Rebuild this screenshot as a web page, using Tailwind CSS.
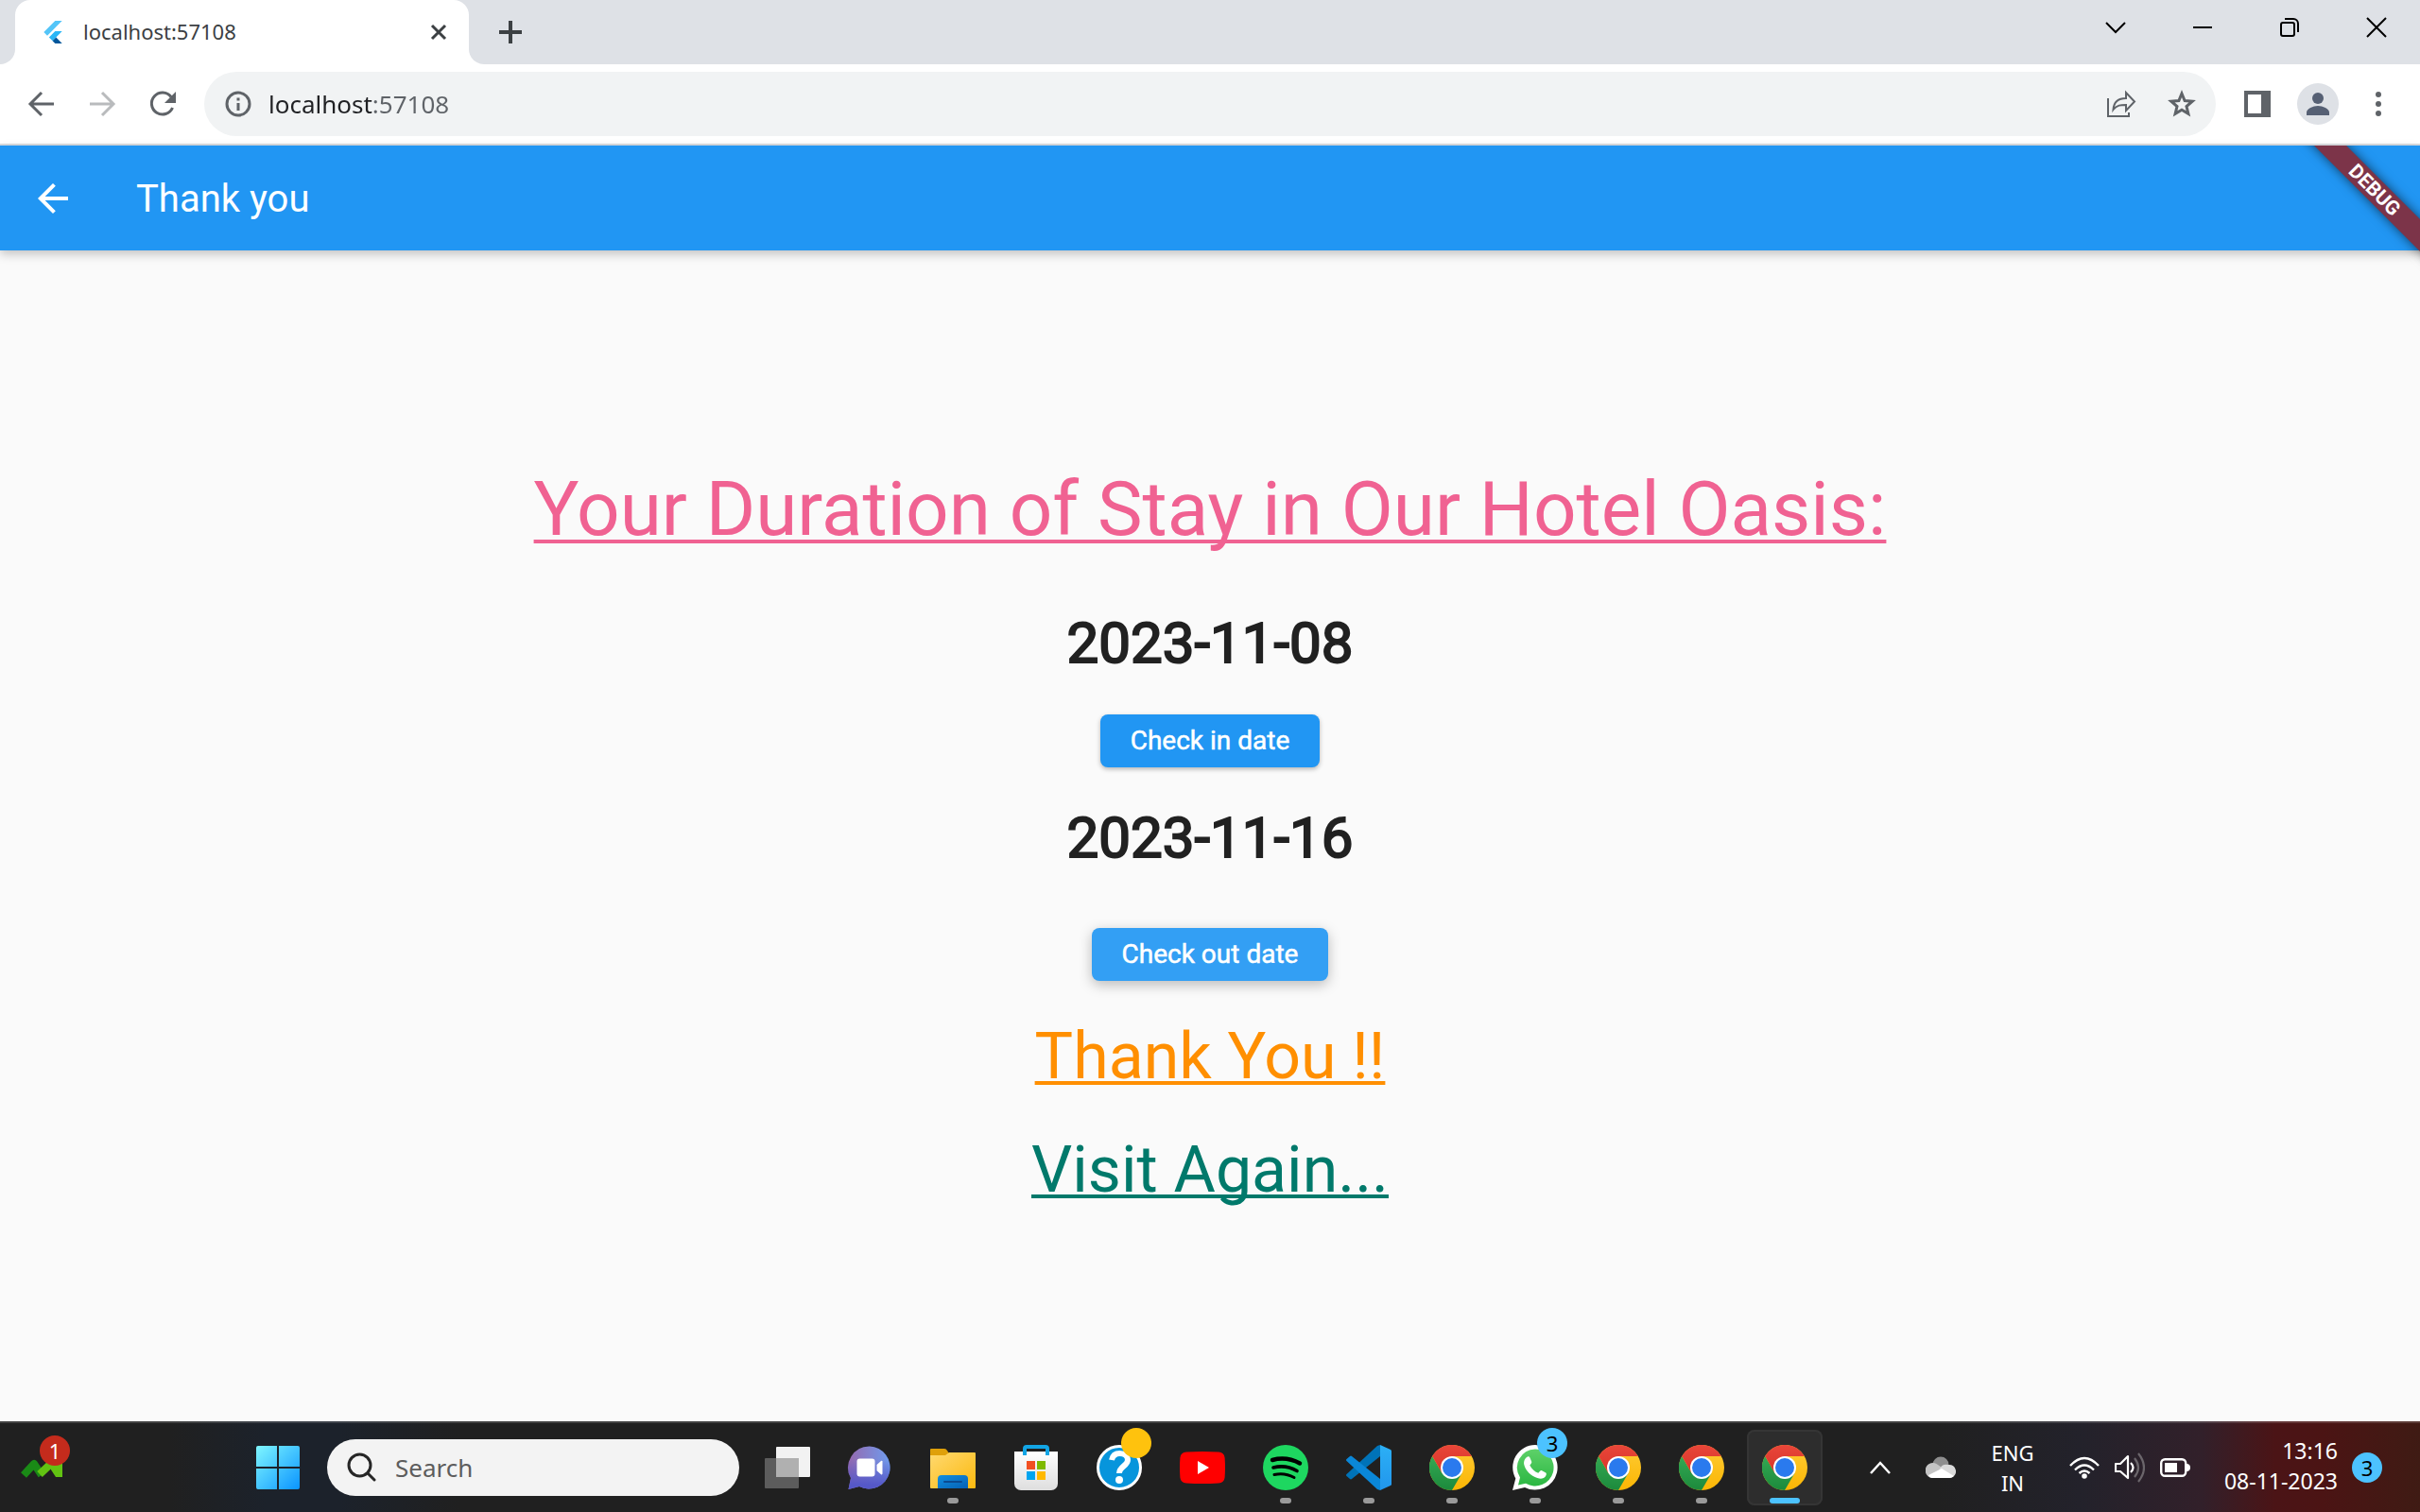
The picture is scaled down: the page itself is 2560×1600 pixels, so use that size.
<!DOCTYPE html>
<html lang="en">
<head>
<meta charset="utf-8">
<title>localhost:57108</title>
<script src="https://cdn.jsdelivr.net/npm/@tailwindcss/browser@4"></script>
</head>
<body class="bg-[#fafafa]">
<svg class="absolute size-0" aria-hidden="true">
  <defs>
    <linearGradient id="gw" x1="0" y1="0" x2="1" y2="1"><stop offset="0" stop-color="#7ff6ff"/><stop offset="1" stop-color="#0a94ff"/></linearGradient>
    <linearGradient id="gchat" x1="0" y1="0" x2="1" y2="0"><stop offset="0" stop-color="#9568ae"/><stop offset="1" stop-color="#6f9cee"/></linearGradient>
    <linearGradient id="gchat2" x1="0" y1="0" x2="0" y2="1"><stop offset=".3" stop-color="#5558c8" stop-opacity="0"/><stop offset=".9" stop-color="#5558c8"/></linearGradient>
    <linearGradient id="gfold" x1="0" y1="0" x2="1" y2="1"><stop offset="0" stop-color="#ffd970"/><stop offset="1" stop-color="#fbb90f"/></linearGradient>
    <linearGradient id="gfb" x1="0" y1="0" x2="1" y2="1"><stop offset="0" stop-color="#1290df"/><stop offset="1" stop-color="#0560b5"/></linearGradient>
    <linearGradient id="gbag" x1="0" y1="0" x2="0" y2="1"><stop offset="0" stop-color="#fff"/><stop offset="1" stop-color="#dedede"/></linearGradient>
    <linearGradient id="gwa" x1="0" y1="0" x2="0" y2="1"><stop offset="0" stop-color="#5ed169"/><stop offset="1" stop-color="#2bb742"/></linearGradient>
    <linearGradient id="gred" x1="0" y1="0" x2="0" y2="1"><stop offset="0" stop-color="#e94639"/><stop offset="1" stop-color="#d8352b"/></linearGradient>
    <linearGradient id="gyel" x1="0" y1="0" x2="0" y2="1"><stop offset="0" stop-color="#fecb35"/><stop offset="1" stop-color="#fbb604"/></linearGradient>
    <linearGradient id="ggrn" x1="0" y1="0" x2="0" y2="1"><stop offset="0" stop-color="#33a853"/><stop offset="1" stop-color="#1c8a3c"/></linearGradient>
    <linearGradient id="gvs" x1="0" y1="0" x2="0" y2="1"><stop offset="0" stop-color="#2cb0f6"/><stop offset="1" stop-color="#2196ec"/></linearGradient>
  </defs>
  <symbol id="chrome" viewBox="0 0 48 48">
    <circle cx="24" cy="24" r="24" fill="url(#gyel)"/>
    <path d="M3.200 12A24 24 0 0 0 24 48L34.400 30H13.600Z" fill="url(#ggrn)"/>
    <path d="M3.200 12A24 24 0 0 1 44.800 12H24L13.600 30Z" fill="url(#gred)"/>
    <circle cx="24" cy="24" r="12" fill="#fff"/><circle cx="24" cy="24" r="10" fill="#2a7aee"/>
  </symbol>
</svg>

<div class="flex min-h-screen flex-col font-['Noto_Sans','Open_Sans',sans-serif]">
  <!-- Tab strip -->
  <header class="flex h-[68px] bg-[#dee1e6] text-[#3c4043]">
    <div class="h-full w-4 bg-white"><div class="h-full rounded-br-2xl bg-[#dee1e6]"></div></div>
    <div class="flex h-full w-[480px] items-center rounded-t-2xl bg-white pr-5 pl-6">
      <svg class="mr-4 size-8 shrink-0" viewBox="-4 -4 32 32"><path d="M14.300 0 2.300 12 6 15.700 21.700 0z" fill="#54c5f8"/><path d="m14.300 11.100-6.400 6.400 3.700 3.700L21.700 11.100z" fill="#29b6f6"/><path d="m11.600 21.200 2.700 2.800h7.400l-6.400-6.500z" fill="#01579b"/></svg>
      <span class="grow pb-0.5 text-[22px] leading-8">localhost:57108</span>
      <button aria-label="Close tab" class="flex size-6 items-center justify-center"><svg class="size-6" viewBox="0 0 24 24" fill="none" stroke="currentColor" stroke-width="3"><path d="m5 5 14 14M19 5 5 19"/></svg></button>
    </div>
    <div class="h-full w-4 bg-white"><div class="h-full rounded-bl-2xl bg-[#dee1e6]"></div></div>
    <button aria-label="New tab" class="ml-4 flex w-6 items-center justify-center"><svg class="size-6" viewBox="0 0 24 24" fill="none" stroke="currentColor" stroke-width="4"><path d="M12 0v24M0 12h24"/></svg></button>
    <div class="ml-auto flex h-[58px] text-black">
      <button aria-label="Search tabs" class="flex w-[92px] items-center justify-center"><svg class="size-6" viewBox="0 0 24 24" fill="none" stroke="currentColor" stroke-width="2"><path d="m2 7 10 10L22 7"/></svg></button>
      <button aria-label="Minimize" class="flex w-[92px] items-center justify-center"><svg class="size-6" viewBox="0 0 24 24" fill="none" stroke="currentColor" stroke-width="2"><path d="M2 12h20"/></svg></button>
      <button aria-label="Restore" class="flex w-[92px] items-center justify-center"><svg class="size-6" viewBox="0 0 24 24" fill="none" stroke="currentColor" stroke-width="2"><rect x="3" y="7" width="14" height="14" rx="2"/><path d="M7 3h9a5 5 0 0 1 5 5v9"/></svg></button>
      <button aria-label="Close" class="flex w-[92px] items-center justify-center"><svg class="size-6" viewBox="0 0 24 24" fill="none" stroke="currentColor" stroke-width="2"><path d="m2 2 20 20M22 2 2 22"/></svg></button>
    </div>
  </header>

  <!-- Toolbar -->
  <div class="flex h-[86px] items-center border-b-2 border-[#dadce0] bg-white px-7 text-[#5f6368]">
    <button aria-label="Back" class="mr-8"><svg class="size-8" viewBox="0 0 32 32" fill="none" stroke="currentColor" stroke-width="3"><path d="M29 16H5M16 4 4 16l12 12"/></svg></button>
    <button aria-label="Forward" class="mr-8 text-[#b9bbbd]"><svg class="size-8" viewBox="0 0 32 32" fill="none" stroke="currentColor" stroke-width="3"><path d="M3 16h24M16 4l12 12-12 12"/></svg></button>
    <button aria-label="Reload" class="mr-7"><svg class="size-8" viewBox="0 0 32 32"><path d="M26.500 20A11.500 11.500 0 1 1 25 8.500" fill="none" stroke="currentColor" stroke-width="3"/><path d="M30 3v12H18z" fill="currentColor"/></svg></button>
    <div class="flex h-[68px] grow items-center rounded-full bg-[#f1f3f4] pr-5 pl-5">
      <svg class="mr-4 size-8 shrink-0" viewBox="0 0 32 32"><circle cx="16" cy="16" r="12" fill="none" stroke="currentColor" stroke-width="3"/><path d="M14.500 15h3v8h-3zM14.500 9.500h3v3h-3z" fill="currentColor"/></svg>
      <input aria-label="Address" value="localhost:57108" class="h-10 min-w-0 grow bg-linear-to-r from-[#202124] from-[110px] to-[#5f6368] to-[110px] bg-clip-text text-[26px] leading-10 text-transparent outline-none">
      <button aria-label="Share" class="mr-8"><svg class="size-8" viewBox="0 0 32 32" fill="none" stroke="currentColor" stroke-width="2"><path d="M2 10v19h22v-4"/><path d="M21 4v6C12 10 8 15 7.500 22c4-5 8-5 13.500-5v6l9-9.500z" stroke-linejoin="miter"/></svg></button>
      <button aria-label="Bookmark"><svg class="size-8" viewBox="0 0 32 32" fill="none" stroke="currentColor" stroke-width="3"><path d="m16 5 3.100 7.500 8.100.7-6.200 5.300 1.900 7.900-6.900-4.200-6.900 4.200L11 18.500l-6.200-5.300 8.100-.7z"/></svg></button>
    </div>
    <button aria-label="Side panel" class="ml-7"><svg class="size-8" viewBox="0 0 32 32"><path d="M2 2h28v28H2zM6 6v20h14V6z" fill="currentColor" fill-rule="evenodd"/></svg></button>
    <button aria-label="Profile" class="ml-[26px]"><svg class="size-11" viewBox="0 0 44 44"><circle cx="22" cy="22" r="22" fill="#dee1e6"/><circle cx="22" cy="16" r="6" fill="#566074"/><path d="M10 34v-3c0-4 7-7 12-7s12 3 12 7v3z" fill="#566074"/></svg></button>
    <button aria-label="Menu" class="ml-[26px]"><svg class="size-8" viewBox="0 0 32 32" fill="currentColor"><circle cx="16" cy="6" r="3"/><circle cx="16" cy="16" r="3"/><circle cx="16" cy="26" r="3"/></svg></button>
  </div>

  <!-- Page -->
  <div class="relative flex grow flex-col font-[Roboto,sans-serif]">
    <div class="z-10 flex h-[111px] items-center bg-[#2196f3] px-8 text-white shadow-[0_4px_10px_rgba(0,0,0,0.22)]">
      <button aria-label="Back"><svg class="size-12" viewBox="0 0 24 24" fill="currentColor"><path d="M20 11H7.830l5.590-5.590L12 4l-8 8 8 8 1.410-1.410L7.830 13H20z"/></svg></button>
      <h1 class="ml-16 pt-0.5 text-[40px] leading-12">Thank you</h1>
    </div>
    <div class="absolute top-0 right-0 z-20 h-[140px] w-[160px] overflow-hidden">
      <div class="absolute top-[35px] right-[-52px] h-6 w-[200px] rotate-45 bg-[#7c3449] text-center text-[21px] leading-6 font-bold text-white shadow-[0_0_12px_rgba(0,0,0,0.6)]">DEBUG</div>
    </div>
    <main class="flex grow flex-col items-center justify-center text-[#212121]">
      <h2 class="text-[80px] leading-[94px] text-[#f06292] underline decoration-4 underline-offset-[5px] [text-decoration-skip-ink:none]">Your Duration of Stay in Our Hotel Oasis:</h2>
      <p class="mt-[60px] text-[60px] leading-[70px] [-webkit-text-stroke:2px_#212121]">2023-11-08</p>
      <button class="mt-10 h-14 rounded-lg bg-[#2196f3] px-8 text-[28px] leading-8 text-white shadow-[0_2px_5px_rgba(0,0,0,0.28)] [-webkit-text-stroke:0.5px_#fff]">Check in date</button>
      <p class="mt-10 text-[60px] leading-[70px] [-webkit-text-stroke:2px_#212121]">2023-11-16</p>
      <button class="mt-[60px] h-14 rounded-lg bg-[#339ff4] px-8 text-[28px] leading-8 text-white shadow-[0_4px_14px_rgba(0,0,0,0.26)] [-webkit-text-stroke:0.5px_#fff]">Check out date</button>
      <p class="mt-10 text-[68px] leading-[80px] text-[#ff8f00] underline decoration-4 underline-offset-[3px] [text-decoration-skip-ink:none]">Thank You !!</p>
      <p class="mt-10 text-[68px] leading-[80px] text-[#00796b] underline decoration-4 underline-offset-[3px] [text-decoration-skip-ink:none]">Visit Again...</p>
    </main>
  </div>

  <!-- Taskbar -->
  <footer class="flex h-24 items-center border-t-2 border-white/15 bg-[linear-gradient(90deg,#202020_0%,#202020_7%,#1c222b_11%,#1c222b_14%,#202020_19%,#202020_80%,#23222b_86%,#32202a_91%,#4b1416_94%,#4b1414_96%,#3f1b14_100%)] bg-origin-border text-white">
    <button aria-label="Widgets" class="relative h-[60px] w-[90px]">
      <svg class="absolute top-5 left-[22px] h-6 w-11" viewBox="0 0 44 24"><path d="M3 18 14 6l8 12" fill="none" stroke="#1a8a16" stroke-width="8" stroke-linejoin="round"/><path d="M20 17 38 0" fill="none" stroke="#62c312" stroke-width="8"/><path d="M24 0h20v20h-7z" fill="#62c312"/></svg>
      <span class="absolute top-[-4px] left-[42px] size-8 rounded-full bg-[#c42b1c] text-center text-[22px] leading-8">1</span>
    </button>
    <button aria-label="Start" class="ml-40 flex w-[88px] items-center justify-center"><svg class="size-[46px]" viewBox="0 0 46 46" fill="url(#gw)"><path d="M2 0h20v22H0V2a2 2 0 0 1 2-2zM24 0h20a2 2 0 0 1 2 2v20H24zM0 24h22v22H2a2 2 0 0 1-2-2zM24 24h22v20a2 2 0 0 1-2 2H24z"/></svg></button>
    <label class="mx-2 flex h-[60px] w-[436px] items-center rounded-full bg-[#f3f3f3] pl-5">
      <svg class="mr-5 size-8 shrink-0" viewBox="0 0 32 32" fill="none" stroke="#262626" stroke-width="3" stroke-linecap="round"><circle cx="14.500" cy="13.500" r="11.500"/><path d="m23 22 7 7"/></svg>
      <input type="search" aria-label="Search" placeholder="Search" class="min-w-0 grow text-[26px] leading-10 text-[#5d5d5d] outline-none placeholder:text-[#5d5d5d]">
    </label>
    <nav class="flex h-20">
      <button aria-label="Task view" class="flex w-[86px] items-center justify-center"><svg class="size-12" viewBox="0 0 48 48"><rect x="12" y="2" width="36" height="32" rx="1" fill="#f2f2f2"/><rect y="14" width="36" height="32" rx="1" fill="#5c5c5c"/><path d="M12 14h24v20H12z" fill="#b0b0b0"/></svg></button>
      <button aria-label="Chat" class="flex w-[88px] items-center justify-center"><svg class="size-12" viewBox="0 0 48 48"><path d="M24 1.500a22.500 22.500 0 1 1-11 42.600L1.500 47l2.500-12A22.500 22.500 0 0 1 24 1.500z" fill="url(#gchat)"/><path d="M24 1.500a22.500 22.500 0 1 1-11 42.600L1.500 47l2.500-12A22.500 22.500 0 0 1 24 1.500z" fill="url(#gchat2)"/><rect x="10.500" y="14.500" width="19" height="19" rx="3" fill="#fff"/><path d="m31.500 21 4.500-4c.6-.5 1.500-.2 1.500.6v13c0 .8-1 1-1.500.6l-4.500-4z" fill="#fff"/></svg></button>
      <button aria-label="File Explorer" class="relative flex w-[88px] items-center justify-center"><svg class="size-12" viewBox="0 0 48 48"><path d="M0 5q0-1 1-1h14q2 0 3 2l2 3v6H0z" fill="#dfa00a"/><path d="M0 11h16l4-3h27q1 0 1 1v36q0 1-1 1H1q-1 0-1-1z" fill="url(#gfold)"/><path d="M8 46V36q0-4 4-4h24q4 0 4 4v10z" fill="url(#gfb)"/><path d="M15 39h18" stroke="#0b4a90" stroke-width="2" stroke-linecap="round"/></svg><i class="absolute bottom-0.5 left-[38px] h-1.5 w-3 rounded-full bg-[#9a9a9a]"></i></button>
      <button aria-label="Microsoft Store" class="flex w-[88px] items-center justify-center"><svg class="size-12" viewBox="0 0 48 48"><path d="M1 7h46v34a7 7 0 0 1-7 7H8a7 7 0 0 1-7-7z" fill="url(#gbag)"/><path d="M12 11V4q0-2 2-2h20q2 0 2 2v7" fill="none" stroke="#12a5e5" stroke-width="4"/><path d="M14 17h9v9h-9z" fill="#f25022"/><path d="M25 17h9v9h-9z" fill="#7fba00"/><path d="M14 28h9v9h-9z" fill="#00a4ef"/><path d="M25 28h9v9h-9z" fill="#ffb900"/></svg></button>
      <button aria-label="Get Help" class="relative flex w-[88px] items-center justify-center"><svg class="size-12" viewBox="0 0 48 48"><circle cx="24" cy="24" r="22.500" fill="#0795dc" stroke="#fff" stroke-width="3"/><path d="M16 16c1-5 4-7 8.500-7 5 0 8.500 3 8.500 7 0 6-9 7-9 14" fill="none" stroke="#fff" stroke-width="6"/><circle cx="24" cy="37" r="4" fill="#fff"/></svg><i class="absolute top-[-2px] left-[46px] size-8 rounded-full bg-[#ffc20d]"></i></button>
      <button aria-label="YouTube" class="flex w-[88px] items-center justify-center"><svg class="size-12" viewBox="0 0 48 48"><path d="M7 7.600q17-1.200 34 0 6 .4 6.600 6 .8 10.400 0 20.800-.6 5.600-6.600 6-17 1.200-34 0-6-.4-6.600-6-.8-10.400 0-20.800.6-5.600 6.600-6z" fill="red"/><path d="m19 17 12 7-12 7z" fill="#fff"/></svg></button>
      <button aria-label="Spotify" class="relative flex w-[88px] items-center justify-center"><svg class="size-12" viewBox="0 0 48 48"><circle cx="24" cy="24" r="24" fill="#1ed760"/><g fill="none" stroke="#000" stroke-linecap="round"><path d="M10 16q15-4 29 3.500" stroke-width="4.500"/><path d="M11 24q13-3.500 25 3.500" stroke-width="3.600"/><path d="M12 31.500q11-2.500 21 3" stroke-width="3"/></g></svg><i class="absolute bottom-0.5 left-[38px] h-1.5 w-3 rounded-full bg-[#9a9a9a]"></i></button>
      <button aria-label="Visual Studio Code" class="relative flex w-[88px] items-center justify-center"><svg class="size-12" viewBox="0 0 48 48"><path d="M.5 31 33 1l3-1v12L6 36q-1 .8-2 0l-3.500-3q-1-1 0-2z" fill="#0073b8"/><path d="M.5 17 33 47l3 1V36L6 12q-1-.8-2 0l-3.500 3q-1 1 0 2z" fill="#0a87d8"/><path d="M36 0 47 5q1 .5 1 1.500v35q0 1-1 1.500l-11 5z" fill="url(#gvs)"/></svg><i class="absolute bottom-0.5 left-[38px] h-1.5 w-3 rounded-full bg-[#9a9a9a]"></i></button>
      <button aria-label="Google Chrome" class="relative flex w-[88px] items-center justify-center"><svg class="size-12"><use href="#chrome"/></svg><i class="absolute bottom-0.5 left-[38px] h-1.5 w-3 rounded-full bg-[#9a9a9a]"></i></button>
      <button aria-label="WhatsApp" class="relative flex w-[88px] items-center justify-center"><svg class="size-12" viewBox="0 0 48 48"><path d="M24 0a23.800 23.800 0 1 1-11 45L0 48l3.300-12.500A23.800 23.800 0 0 1 24 0z" fill="#fff"/><path d="M24 4.500a19.500 19.500 0 1 1-10 36.200L6 42.500l2-8A19.500 19.500 0 0 1 24 4.500z" fill="url(#gwa)"/><path d="M16 12.500c1-.4 2 0 2.400 1l1.800 4.300c.3.900-.2 1.700-1.900 3.700 2 4 5 6.700 9 8.300 1.400-1.500 2.300-3.200 3.400-2.700l4.600 2.400c1 .6.500 3-1 4.500-2 2-5 2-8 1-7-2.300-12.500-8-14-14-.8-3.600 1-7.500 3.700-8.500z" fill="#fff"/></svg><span class="absolute top-[-2px] left-[46px] size-8 rounded-full bg-[#4cc2ff] text-center text-[22px] leading-8 text-black">3</span><i class="absolute bottom-0.5 left-[38px] h-1.5 w-3 rounded-full bg-[#9a9a9a]"></i></button>
      <button aria-label="Google Chrome" class="relative flex w-[88px] items-center justify-center"><svg class="size-12"><use href="#chrome"/></svg><i class="absolute bottom-0.5 left-[38px] h-1.5 w-3 rounded-full bg-[#9a9a9a]"></i></button>
      <button aria-label="Google Chrome" class="relative flex w-[88px] items-center justify-center"><svg class="size-12"><use href="#chrome"/></svg><i class="absolute bottom-0.5 left-[38px] h-1.5 w-3 rounded-full bg-[#9a9a9a]"></i></button>
      <button aria-label="Google Chrome, active" class="relative mx-1 flex w-20 items-center justify-center rounded-lg bg-[#2d2d2d] ring-2 ring-[#353535] ring-inset"><svg class="size-12"><use href="#chrome"/></svg><i class="absolute bottom-0.5 left-6 h-1.5 w-8 rounded-full bg-[#4cc2ff]"></i></button>
    </nav>
    <div class="ml-auto flex items-center pr-10 text-[22px] leading-8">
      <button aria-label="Hidden icons"><svg class="size-6" viewBox="0 0 24 24" fill="none" stroke="currentColor" stroke-width="2.500"><path d="m2 18 10-11 10 11"/></svg></button>
      <svg class="ml-9 h-6 w-8" viewBox="0 0 32 24"><circle cx="16" cy="9" r="8.500" fill="#8e8e8e"/><path d="M8 23a8 8 0 1 1 5-14l11 8-10 6z" fill="#c4c4c4"/><path d="M15 13a8 8 0 0 1 9-4 7 7 0 0 1 2 14H12z" fill="#dadada"/><path d="M3 20 17 13l13 8q-2 2-5 2H7q-3 0-4-3z" fill="#fff"/></svg>
      <div class="ml-9 w-12 text-center">ENG<br>IN</div>
      <svg class="ml-9 h-6 w-8" viewBox="0 0 32 24" fill="none" stroke="#fff" stroke-width="2.400"><path d="M1 10Q16-6 31 10M6 14.500q10-10 20 0M10.500 18q5.500-5 11 0"/><circle cx="16" cy="21" r="1.600" fill="#fff"/></svg>
      <svg class="ml-4 size-8" viewBox="0 0 32 32" fill="none" stroke="#fff" stroke-width="2.200" stroke-linejoin="round"><path d="M1 12v8h5l8 7V4l-8 8z"/><path d="M17 11q5 5 0 10"/><path d="M21 6q8 10 0 20M25 1q12 15 0 30" stroke="#6b666b"/></svg>
      <svg class="ml-4 h-5 w-8" viewBox="0 0 32 20"><rect x="1.200" y="1.200" width="26" height="17.600" rx="4" fill="none" stroke="#fff" stroke-width="2.400"/><path d="M5 5h13v10H5zM28 6q4 0 4 4t-4 4z" fill="#fff"/></svg>
      <div class="ml-7 w-32 pb-1 text-right text-[23px] whitespace-nowrap">13:16<br>08-11-2023</div>
      <span class="ml-[15px] size-8 rounded-full bg-[#4cc2ff] text-center text-black">3</span>
    </div>
  </footer>
</div>
</body>
</html>
